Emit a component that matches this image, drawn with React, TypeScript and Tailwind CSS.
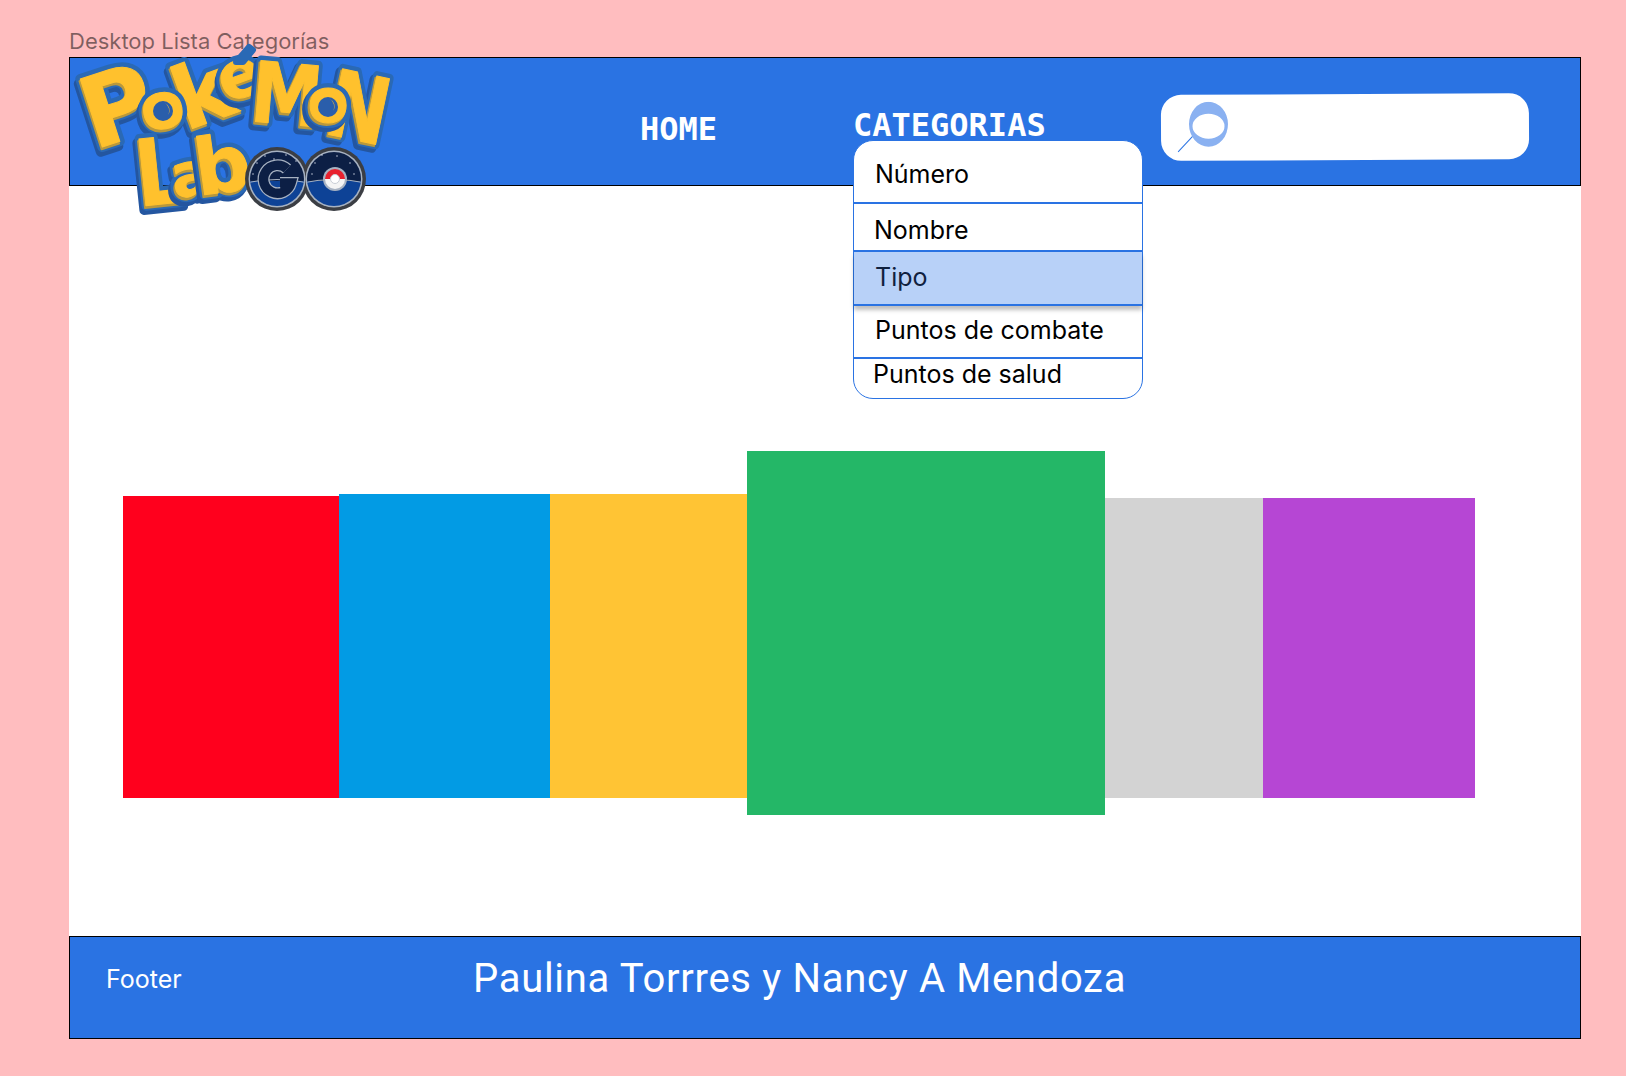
const INTER = "font-['Inter',sans-serif]";

// Each block of the band, top offset is from the top of the white area
const bands = [
  { id: 'red', cls: 'w-[216px] h-[302px] mt-[310px] bg-[#ff001d]' },
  { id: 'blue', cls: 'w-[211px] h-[304px] mt-[308px] bg-[#029be4]' },
  { id: 'yellow', cls: 'w-[197px] h-[304px] mt-[308px] bg-[#ffc434]' },
  { id: 'green', cls: 'w-[358px] h-[364px] mt-[265px] bg-[#24b767]' },
  { id: 'grey', cls: 'w-[158px] h-[300px] mt-[312px] bg-[#d3d3d3]' },
  { id: 'purple', cls: 'w-[212px] h-[300px] mt-[312px] bg-[#b646d4]' },
];

// Painted in this order, the round letters sit on top of their neighbours
const letters = [
  { ch: 'P', x: 56, y: 79, size: 98, rot: -18, sx: 1 },
  { ch: 'k', x: 141, y: 66, size: 86, rot: -20, sx: 1 },
  { ch: 'o', x: 102, y: 85, size: 64, rot: -10, sx: 1 },
  { ch: 'e', x: 180, y: 53, size: 66, rot: -20, sx: 1 },
  { ch: 'M', x: 226, y: 68, size: 84, rot: 5, sx: 0.85 },
  { ch: 'N', x: 298, y: 81, size: 92, rot: 12, sx: 0.8 },
  { ch: 'o', x: 267, y: 80, size: 60, rot: 0, sx: 1 },
  { ch: 'L', x: 99, y: 145, size: 92, rot: -6, sx: 0.85 },
  { ch: 'a', x: 131, y: 153, size: 60, rot: -10, sx: 1 },
  { ch: 'b', x: 161, y: 138, size: 78, rot: -8, sx: 1 },
];

const Letter = ({ ch, x, y, size, rot, sx }: (typeof letters)[number]) => {
  const base = ch === 'o' || ch === 'e' || ch === 'a' ? size * 0.27 : size * 0.36;
  const props = {
    x: 0,
    y: base,
    fontSize: size,
    fontWeight: 700,
    fontFamily: "'DejaVu Sans', sans-serif",
    textAnchor: 'middle' as const,
    strokeLinejoin: 'round' as const,
  };
  return (
    <g transform={`translate(${x} ${y}) rotate(${rot}) scale(${sx} 1)`}>
      <text {...props} transform="translate(-3 4)" fill="#2456a0" stroke="#2456a0" strokeWidth={10}>{ch}</text>
      <text {...props} fill="#2a69b5" stroke="#2a69b5" strokeWidth={10}>{ch}</text>
      <text {...props} transform="translate(-1.5 2)" fill="#b9983c" stroke="#b9983c" strokeWidth={2}>{ch}</text>
      <text {...props} fill="#ffc12d" stroke="#ffc12d" strokeWidth={1}>{ch}</text>
    </g>
  );
};

const Logo = () => (
  <svg viewBox="0 0 340 200" className="absolute left-[-9px] top-[-32px] w-[340px] h-[200px] overflow-visible">
    <defs>
      <clipPath id="go-g"><circle cx="216" cy="153" r="27" /></clipPath>
      <clipPath id="go-o"><circle cx="273" cy="153" r="27" /></clipPath>
    </defs>
    <g>
      {letters.map((l, i) => <Letter key={i} {...l} />)}
    </g>
    {/* eyes of the round letters */}
    <circle cx="103" cy="84" r="13" fill="#ffc12d" />
    <circle cx="102" cy="85" r="10" fill="#2a5eab" />
    <path d="M104 77a8 8 0 0 1 3 12a9 9 0 0 0-3-12z" fill="#ffc12d" />
    <circle cx="268" cy="80" r="13" fill="#ffc12d" />
    <circle cx="267" cy="81" r="10" fill="#2a5eab" />
    <path d="M269 73a8 8 0 0 1 3 12a9 9 0 0 0-3-12z" fill="#ffc12d" />
    <polygon points="175,36 188,21 192,24 182,36" fill="#ffc12d" stroke="#2a69b5" strokeWidth={6} strokeLinejoin="round" />
    {/* GO emblem */}
    <circle cx="216" cy="153" r="32" fill="#3b3e44" />
    <circle cx="273" cy="153" r="32" fill="#3b3e44" />
    <circle cx="216" cy="153" r="28.5" fill="#a7b2c2" />
    <circle cx="273" cy="153" r="28.5" fill="#a7b2c2" />
    <g clipPath="url(#go-g)">
      <rect x="184" y="120" width="64" height="36" fill="#0c1f45" />
      <rect x="184" y="155" width="64" height="32" fill="#0d4296" />
      <path d="M184 157q32-7 64 0" fill="none" stroke="#a7b2c2" strokeWidth={1} />
    </g>
    <g clipPath="url(#go-o)">
      <rect x="241" y="120" width="64" height="36" fill="#0c1f45" />
      <rect x="241" y="155" width="64" height="32" fill="#0d4296" />
      <path d="M241 157q32-7 64 0" fill="none" stroke="#a7b2c2" strokeWidth={1} />
    </g>
    <path d="M226 143a14 14 0 1 0 4 14h-11" fill="none" stroke="#a7b2c2" strokeWidth={12} />
    <path d="M226 143a14 14 0 1 0 4 14h-11" fill="none" stroke="#0c1f45" strokeWidth={9.5} />
    <circle cx="274" cy="153" r="12" fill="#a7b2c2" />
    <path d="M264 153a10 10 0 0 1 20 0z" fill="#e8212e" />
    <path d="M264 153a10 10 0 0 0 20 0z" fill="#f4f4f4" />
    <circle cx="274" cy="153" r="4.5" fill="#ffffff" stroke="#c9ced6" />
    {[[196, 137], [204, 130], [213, 133], [225, 129], [192, 148], [235, 135], [254, 137], [261, 129], [276, 130], [289, 137], [293, 148], [251, 148]].map(([cx, cy]) => (
      <circle key={`${cx}-${cy}`} cx={cx} cy={cy} r="0.7" fill="#dfe6f2" />
    ))}
  </svg>
);

const SearchIcon = () => (
  <svg viewBox="0 0 56 52" className="w-[56px] h-[52px]">
    <line x1="2" y1="50" x2="17" y2="34" stroke="#2a73e3" strokeWidth="1" />
    <ellipse cx="32.5" cy="22.5" rx="19.5" ry="22.5" fill="#8ab1f1" />
    <ellipse cx="32.5" cy="24.5" rx="16" ry="12.5" fill="#ffffff" />
  </svg>
);

const CategoryMenu = () => (
  <div className={`absolute left-0 top-[33px] z-10 w-[290px] flex flex-col rounded-[20px] border border-[#2a73e3] bg-white text-[25px] leading-[30px] font-normal text-black ${INTER}`}>
    <div className="h-[63px] flex items-center pl-[21px] pt-[5px] border-b-2 border-[#2a73e3]">Número</div>
    <div className="h-[48px] flex items-center pl-[20px] pt-[6px] border-b-2 border-[#2a73e3]">Nombre</div>
    <div className="relative h-[54px] flex items-center pl-[21px] pb-[3px] bg-[#b8d1f8] text-[#10213f] border-b-2 border-[#2a73e3] shadow-[0_4px_4px_rgba(0,0,0,0.25)]">Tipo</div>
    <div className="h-[53px] flex items-center pl-[21px] pb-[4px] border-b-2 border-[#2a73e3]">Puntos de combate</div>
    <div className="h-[39px] pl-[19px]">Puntos de salud</div>
  </div>
);

const App = () => {
  return (
    <div className="w-[1626px] h-[1076px] bg-[#ffbdbf] pl-[69px] overflow-hidden">
      <div className={`h-[57px] pt-[27px] text-[22px] leading-[28px] text-black/50 ${INTER}`}>Desktop Lista Categorías</div>

      <div className="w-[1512px] flex flex-col">
        <header className="relative h-[129px] bg-[#2a73e3] border border-black flex items-start pl-[570px] font-['DejaVu_Sans_Mono',monospace] font-bold text-white text-[32px] leading-[36px]">
          <Logo />
          <a className="mt-[53px] w-[213px]">HOME</a>
          <div className="relative mt-[49px] w-[308px]">
            CATEGORIAS
            <CategoryMenu />
          </div>
          <div className="mt-[36px] w-[368px] h-[66px] rounded-[20px] bg-white flex items-start pl-[15px] pt-[7px] rotate-[-0.3deg]">
            <SearchIcon />
          </div>
        </header>

        <main className="h-[750px] bg-white flex items-start pl-[54px]">
          {bands.map((band) => (
            <div key={band.id} className={band.cls} />
          ))}
        </main>

        <footer className="h-[103px] bg-[#2a73e3] border border-black flex items-start text-white">
          <span className={`ml-[36px] mt-[27px] w-[367px] text-[25px] leading-[30px] ${INTER}`}>Footer</span>
          <span className="mt-[17px] font-['Roboto',sans-serif] text-[40px] leading-[50px] tracking-[0.7px]">Paulina Torrres y Nancy A Mendoza</span>
        </footer>
      </div>
    </div>
  );
};

export default App;
